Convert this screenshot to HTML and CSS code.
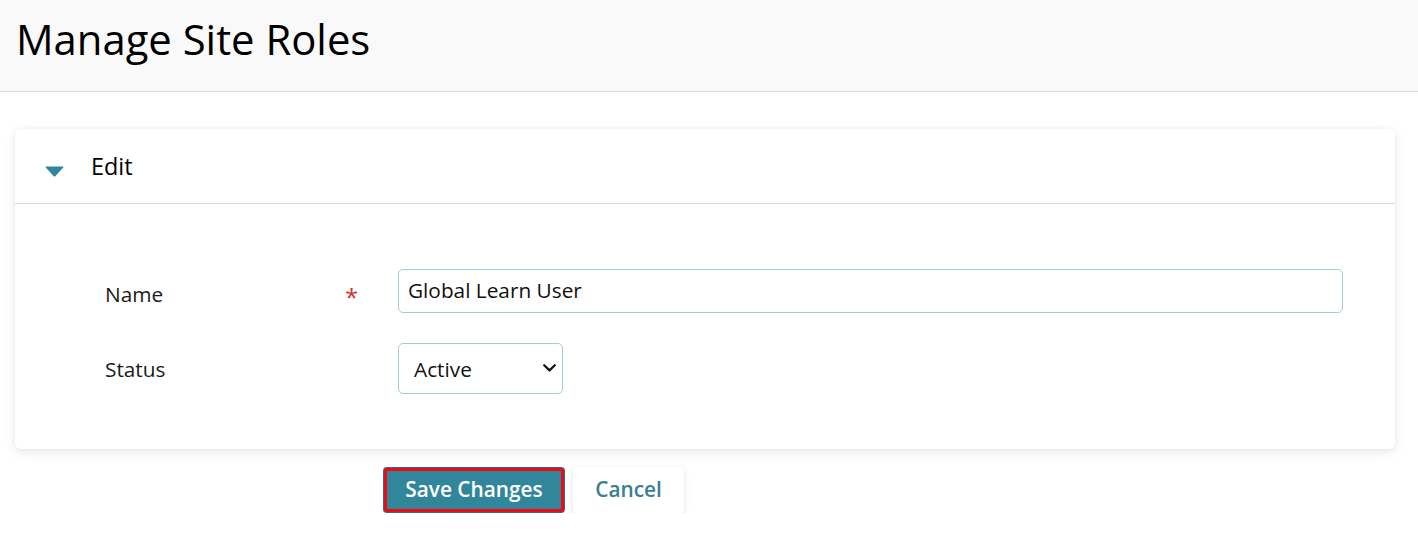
FILE: index.html
```html
<!DOCTYPE html>
<html lang="en">
<head>
<meta charset="utf-8">
<title>Manage Site Roles</title>
<link rel="stylesheet" href="styles.css">
</head>
<body>
<header class="page-header">
  <h1 class="page-title">Manage Site Roles</h1>
</header>
<main class="page-main">
  <section class="card">
    <div class="card-header">
      <svg class="caret" width="19" height="11" viewBox="0 0 19 11" aria-hidden="true"><path d="M1.2 0.5 H17.8 Q19 0.5 18.2 1.5 L10.3 10.2 Q9.5 11 8.7 10.2 L0.8 1.5 Q0 0.5 1.2 0.5 Z" fill="#31869b"/></svg>
      <span class="card-title">Edit</span>
    </div>
    <div class="card-body">
      <div class="form-row">
        <label class="form-label label-name" for="name">Name</label>
        <span class="required">*</span>
        <input id="name" class="text-input" type="text" value="Global Learn User">
      </div>
      <div class="form-row">
        <label class="form-label" for="status">Status</label>
        <span class="required"></span>
        <div class="select-wrap">
          <select id="status" class="select-input">
            <option>Active</option>
            <option>Inactive</option>
          </select>
          <svg class="select-chevron" width="13" height="8" viewBox="0 0 13 8" aria-hidden="true"><path d="M1.2 1.2 L6.5 6.4 L11.8 1.2" fill="none" stroke="#111" stroke-width="2.2" stroke-linecap="round" stroke-linejoin="round"/></svg>
        </div>
      </div>
    </div>
  </section>
  <div class="actions">
    <button class="btn btn-primary" type="button">Save Changes</button>
    <button class="btn btn-secondary" type="button">Cancel</button>
  </div>
</main>
</body>
</html>
```

FILE: styles.css
```css
* { box-sizing: border-box; }

html, body {
  margin: 0;
  padding: 0;
  background: #ffffff;
  font-family: "Open Sans", "Liberation Sans", sans-serif;
  font-size: 20.8px;
  color: #1a1a1a;
}

.page-header {
  height: 92px;
  background: #f9f9f9;
  border-bottom: 1px solid #d3dbe1;
  padding: 10px 0 0 16px;
}

.page-title {
  margin: 0;
  font-size: 41.8px;
  font-weight: 400;
  line-height: normal;
  color: #000;
}

.page-main {
  padding: 37px 23px 0 15px;
}

.card {
  background: #ffffff;
  border-radius: 6px;
  box-shadow: 0 3px 12px rgba(0, 0, 0, 0.09), 0 0 4px rgba(0, 0, 0, 0.04);
}

.card-header {
  height: 75px;
  display: flex;
  align-items: center;
  padding-left: 30px;
  border-bottom: 1px solid #d3dbe1;
}

.caret {
  display: block;
  margin-top: 10px;
}

.card-title {
  margin-left: 27px;
  font-size: 23.4px;
  color: #000;
  line-height: 1;
  margin-top: 2px;
}

.card-body {
  padding: 65px 52px 55px 90px;
  display: flex;
  flex-direction: column;
  gap: 30px;
}

.form-row {
  display: grid;
  grid-template-columns: 240px 53px 1fr;
  align-items: center;
}

.form-label {
  font-size: 20.8px;
  color: #1a1a1a;
}

.label-name {
  margin-top: 5px;
}

.required {
  color: #c8372d;
  font-size: 24px;
  line-height: 1;
  margin-top: 11px;
  padding-left: 0;
}

.text-input {
  width: 945px;
  height: 44px;
  border: 1px solid #a7cbd6;
  border-radius: 5px;
  padding: 0 9px 2px;
  font-family: inherit;
  font-size: 20.8px;
  color: #111;
  background: #fff;
  outline: none;
}

.select-wrap {
  position: relative;
  width: 165px;
}

.select-input {
  appearance: none;
  -webkit-appearance: none;
  width: 165px;
  height: 51px;
  border: 1px solid #a7cbd6;
  border-radius: 5px;
  padding: 0 0 0 15px;
  font-family: inherit;
  font-size: 20.8px;
  color: #111;
  background: #fff;
  outline: none;
}

.select-chevron {
  position: absolute;
  right: 7px;
  top: 21px;
  pointer-events: none;
}

.actions {
  display: flex;
  gap: 8px;
  padding: 18px 0 0 368px;
}

.btn {
  height: 46px;
  border-radius: 4px;
  font-family: inherit;
  font-size: 20.8px;
  font-weight: 600;
  cursor: pointer;
}

.btn-primary {
  width: 182px;
  background: #31869b;
  color: #ffffff;
  border: 2px solid #2a6f80;
  outline: 3px solid #ee0a14;
  outline-offset: -4px;
  padding: 0 0 2px;
}

.btn-secondary {
  width: 111px;
  background: #ffffff;
  color: #3a7e93;
  border: none;
  box-shadow: 0 2px 6px rgba(0, 0, 0, 0.12);
  padding: 0 0 2px;
}
```
